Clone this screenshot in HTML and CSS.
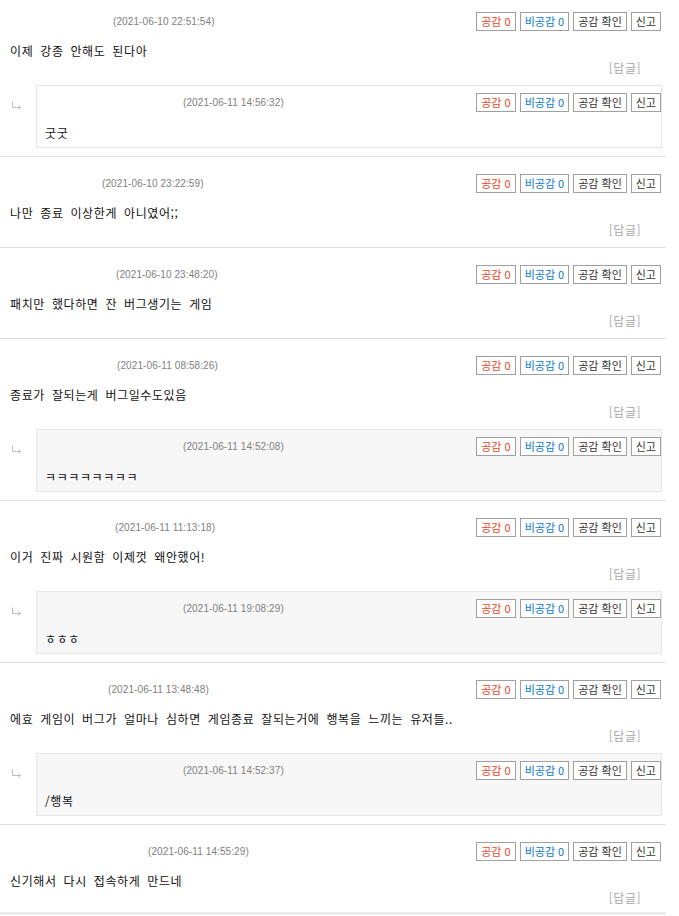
FILE: index.html
```html
<!DOCTYPE html>
<html lang="ko">

<head>
    <meta charset="UTF-8">
    <meta name="viewport" content="width=device-width, initial-scale=1.0">
    <title>댓글</title>
    <link rel="stylesheet" href="styles.css">
</head>

<body>

    <div id="komentarze">

        <div class="komentarz">
            <div class="naglowek">
                <span class="nick" style="width: 103px"></span>
                <span class="data">(2021-06-10 22:51:54)</span>
                <div class="przyciski">
                    <span class="btn red">공감 0</span>
                    <span class="btn blue">비공감 0</span>
                    <span class="btn">공감 확인</span>
                    <span class="btn">신고</span>
                </div>
            </div>
            <div class="tresc">이제 강종 안해도 된다아</div>
            <div class="odpowiedz"><span>[답글]</span></div>
            <div class="reply">
                <div class="strzalka"><svg width="11" height="10" viewBox="0 0 11 10"><path d="M1.5 0.5 V6.5 H9.5 M7.5 4.5 L9.5 6.5 L7.5 8.5" fill="none" stroke="#bdbdbd" stroke-width="1"/></svg></div>
                <div class="box white">
                    <div class="naglowek">
                        <span class="nick" style="width: 138px"></span>
                        <span class="data">(2021-06-11 14:56:32)</span>
                        <div class="przyciski">
                            <span class="btn red">공감 0</span>
                            <span class="btn blue">비공감 0</span>
                            <span class="btn">공감 확인</span>
                            <span class="btn">신고</span>
                        </div>
                    </div>
                    <div class="tresc">굿굿</div>
                </div>
            </div>
        </div>

        <div class="komentarz">
            <div class="naglowek">
                <span class="nick" style="width: 92px"></span>
                <span class="data">(2021-06-10 23:22:59)</span>
                <div class="przyciski">
                    <span class="btn red">공감 0</span>
                    <span class="btn blue">비공감 0</span>
                    <span class="btn">공감 확인</span>
                    <span class="btn">신고</span>
                </div>
            </div>
            <div class="tresc">나만 종료 이상한게 아니였어;;</div>
            <div class="odpowiedz"><span>[답글]</span></div>
        </div>

        <div class="komentarz">
            <div class="naglowek">
                <span class="nick" style="width: 106px"></span>
                <span class="data">(2021-06-10 23:48:20)</span>
                <div class="przyciski">
                    <span class="btn red">공감 0</span>
                    <span class="btn blue">비공감 0</span>
                    <span class="btn">공감 확인</span>
                    <span class="btn">신고</span>
                </div>
            </div>
            <div class="tresc">패치만 했다하면 잔 버그생기는 게임</div>
            <div class="odpowiedz"><span>[답글]</span></div>
        </div>

        <div class="komentarz">
            <div class="naglowek">
                <span class="nick" style="width: 107px"></span>
                <span class="data">(2021-06-11 08:58:26)</span>
                <div class="przyciski">
                    <span class="btn red">공감 0</span>
                    <span class="btn blue">비공감 0</span>
                    <span class="btn">공감 확인</span>
                    <span class="btn">신고</span>
                </div>
            </div>
            <div class="tresc">종료가 잘되는게 버그일수도있음</div>
            <div class="odpowiedz"><span>[답글]</span></div>
            <div class="reply">
                <div class="strzalka"><svg width="11" height="10" viewBox="0 0 11 10"><path d="M1.5 0.5 V6.5 H9.5 M7.5 4.5 L9.5 6.5 L7.5 8.5" fill="none" stroke="#bdbdbd" stroke-width="1"/></svg></div>
                <div class="box">
                    <div class="naglowek">
                        <span class="nick" style="width: 138px"></span>
                        <span class="data">(2021-06-11 14:52:08)</span>
                        <div class="przyciski">
                            <span class="btn red">공감 0</span>
                            <span class="btn blue">비공감 0</span>
                            <span class="btn">공감 확인</span>
                            <span class="btn">신고</span>
                        </div>
                    </div>
                    <div class="tresc">ㅋㅋㅋㅋㅋㅋㅋㅋ</div>
                </div>
            </div>
        </div>

        <div class="komentarz">
            <div class="naglowek">
                <span class="nick" style="width: 105px"></span>
                <span class="data">(2021-06-11 11:13:18)</span>
                <div class="przyciski">
                    <span class="btn red">공감 0</span>
                    <span class="btn blue">비공감 0</span>
                    <span class="btn">공감 확인</span>
                    <span class="btn">신고</span>
                </div>
            </div>
            <div class="tresc">이거 진짜 시원함 이제껏 왜안했어!</div>
            <div class="odpowiedz"><span>[답글]</span></div>
            <div class="reply">
                <div class="strzalka"><svg width="11" height="10" viewBox="0 0 11 10"><path d="M1.5 0.5 V6.5 H9.5 M7.5 4.5 L9.5 6.5 L7.5 8.5" fill="none" stroke="#bdbdbd" stroke-width="1"/></svg></div>
                <div class="box">
                    <div class="naglowek">
                        <span class="nick" style="width: 138px"></span>
                        <span class="data">(2021-06-11 19:08:29)</span>
                        <div class="przyciski">
                            <span class="btn red">공감 0</span>
                            <span class="btn blue">비공감 0</span>
                            <span class="btn">공감 확인</span>
                            <span class="btn">신고</span>
                        </div>
                    </div>
                    <div class="tresc">ㅎㅎㅎ</div>
                </div>
            </div>
        </div>

        <div class="komentarz">
            <div class="naglowek">
                <span class="nick" style="width: 98px"></span>
                <span class="data">(2021-06-11 13:48:48)</span>
                <div class="przyciski">
                    <span class="btn red">공감 0</span>
                    <span class="btn blue">비공감 0</span>
                    <span class="btn">공감 확인</span>
                    <span class="btn">신고</span>
                </div>
            </div>
            <div class="tresc">에효 게임이 버그가 얼마나 심하면 게임종료 잘되는거에 행복을 느끼는 유저들..</div>
            <div class="odpowiedz"><span>[답글]</span></div>
            <div class="reply">
                <div class="strzalka"><svg width="11" height="10" viewBox="0 0 11 10"><path d="M1.5 0.5 V6.5 H9.5 M7.5 4.5 L9.5 6.5 L7.5 8.5" fill="none" stroke="#bdbdbd" stroke-width="1"/></svg></div>
                <div class="box">
                    <div class="naglowek">
                        <span class="nick" style="width: 138px"></span>
                        <span class="data">(2021-06-11 14:52:37)</span>
                        <div class="przyciski">
                            <span class="btn red">공감 0</span>
                            <span class="btn blue">비공감 0</span>
                            <span class="btn">공감 확인</span>
                            <span class="btn">신고</span>
                        </div>
                    </div>
                    <div class="tresc">/행복</div>
                </div>
            </div>
        </div>

        <div class="komentarz ostatni">
            <div class="naglowek">
                <span class="nick" style="width: 138px"></span>
                <span class="data">(2021-06-11 14:55:29)</span>
                <div class="przyciski">
                    <span class="btn red">공감 0</span>
                    <span class="btn blue">비공감 0</span>
                    <span class="btn">공감 확인</span>
                    <span class="btn">신고</span>
                </div>
            </div>
            <div class="tresc">신기해서 다시 접속하게 만드네</div>
            <div class="odpowiedz"><span>[답글]</span></div>
        </div>

    </div>

</body>

</html>
```

FILE: styles.css
```css
body {
    margin: 0;
    background-color: #ffffff;
    color: #222222;
    font-family: "Noto Sans CJK KR", "Liberation Sans", sans-serif;
    font-size: 12px;
    overflow: hidden;
}

#komentarze {
    width: 666px;
    margin-top: -5px;
}

.komentarz {
    padding: 17px 5px 10px 10px;
    border-bottom: 1px solid #dddddd;
}

.komentarz.ostatni {
    padding-bottom: 7px;
    border-bottom: 3px solid #ececec;
}

.naglowek {
    display: flex;
    align-items: center;
    height: 19px;
}

.nick {
    display: inline-block;
    flex-shrink: 0;
}

.data {
    font-family: "Liberation Sans", Arial, sans-serif;
    font-size: 10px;
    color: #808080;
    letter-spacing: 0.1px;
}

.przyciski {
    display: flex;
    gap: 4px;
    margin-left: auto;
}

.btn {
    display: inline-block;
    box-sizing: border-box;
    height: 19px;
    line-height: 17px;
    padding: 0 4px;
    border: 1px solid #a0a0a0;
    font-size: 11px;
    color: #333333;
    background-color: #ffffff;
}

.btn.red {
    color: #e8461e;
}

.btn.blue {
    color: #0b78cc;
}

.tresc {
    margin-top: 10px;
    line-height: 20px;
    letter-spacing: 0.6px;
    word-spacing: 3px;
    color: #111111;
}

.odpowiedz {
    display: flex;
    justify-content: flex-end;
    padding-right: 20px;
    line-height: 14px;
    letter-spacing: 0.5px;
    color: #a8a8a8;
}

.reply {
    display: flex;
    margin-top: 10px;
    margin-bottom: -2px;
}

.strzalka {
    width: 26px;
    padding-top: 16px;
    padding-left: 1px;
    box-sizing: border-box;
}

.strzalka svg {
    display: block;
}

.box {
    flex: 1;
    border: 1px solid #e6e6e6;
    background-color: #f7f7f7;
    padding: 7px 0 4px 8px;
    margin-right: -1px;
}

.box.white {
    background-color: #ffffff;
}

.box .tresc {
    margin-top: 11px;
}
```
